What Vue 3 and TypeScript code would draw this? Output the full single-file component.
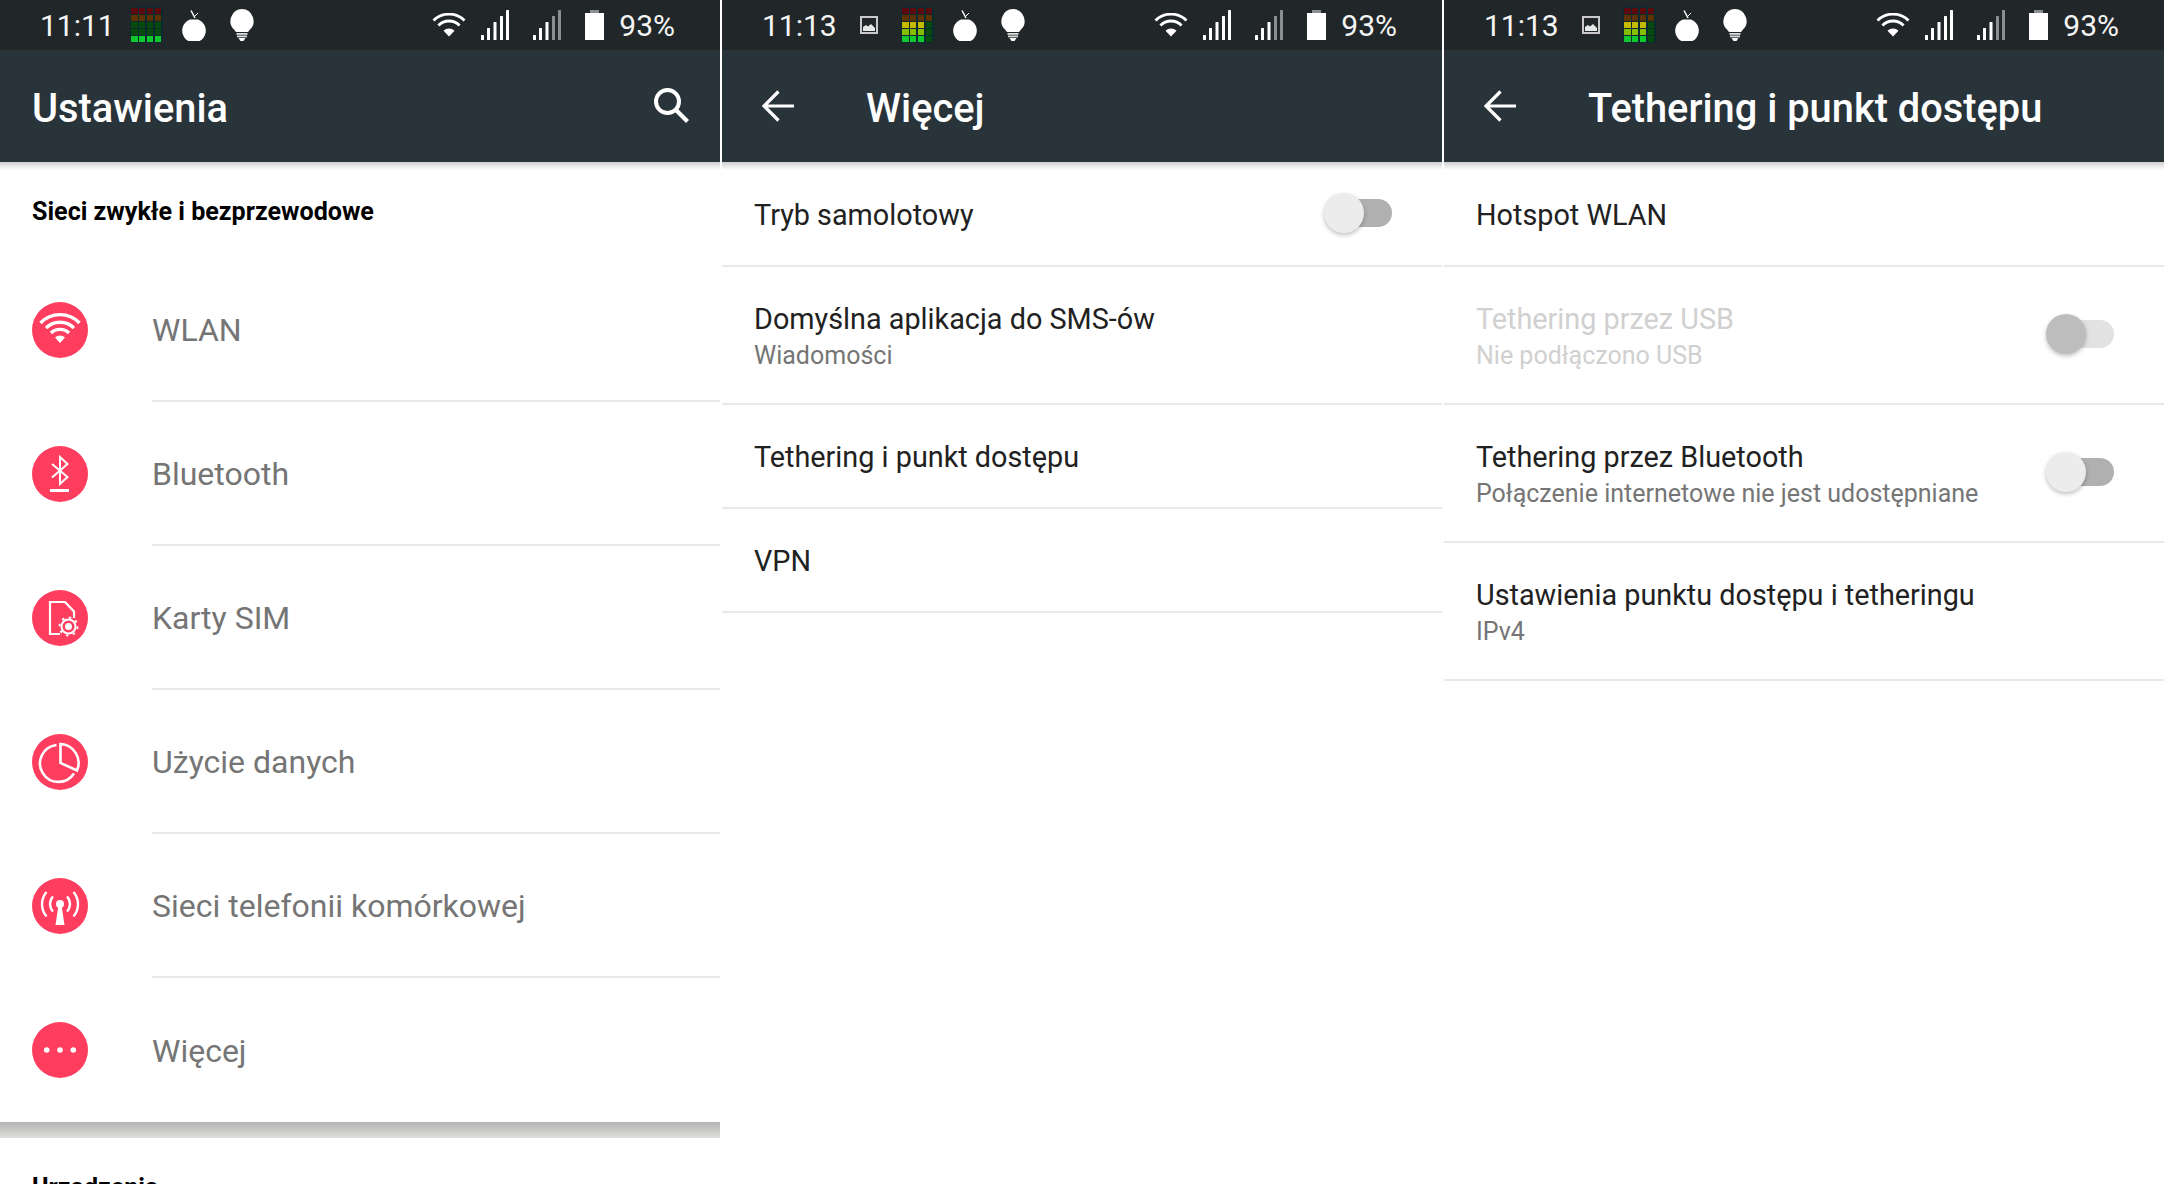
<script setup lang="ts">
interface Row { title: string; sub?: string; toggle?: 'on' | 'off'; disabled?: boolean }
interface Panel {
  key: string; title: string; back: boolean; time: string; gallery: boolean;
  meter: string[]; rows: Row[];
}
const lowMeter = ['rrrr', 'bbbb', 'gggg', 'gggg', 'llll'];
const highMeter = ['rrrr', 'bbbb', 'yyyg', 'cccg', 'lllg'];

const panels: Panel[] = [
  { key: 'settings', title: 'Ustawienia', back: false, time: '11:11', gallery: false, meter: lowMeter, rows: [] },
  {
    key: 'more', title: 'Więcej', back: true, time: '11:13', gallery: true, meter: highMeter,
    rows: [
      { title: 'Tryb samolotowy', toggle: 'on' },
      { title: 'Domyślna aplikacja do SMS-ów', sub: 'Wiadomości' },
      { title: 'Tethering i punkt dostępu' },
      { title: 'VPN' },
    ],
  },
  {
    key: 'tether', title: 'Tethering i punkt dostępu', back: true, time: '11:13', gallery: true, meter: highMeter,
    rows: [
      { title: 'Hotspot WLAN' },
      { title: 'Tethering przez USB', sub: 'Nie podłączono USB', toggle: 'off', disabled: true },
      { title: 'Tethering przez Bluetooth', sub: 'Połączenie internetowe nie jest udostępniane', toggle: 'on' },
      { title: 'Ustawienia punktu dostępu i tetheringu', sub: 'IPv4' },
    ],
  },
];

const networkItems = [
  { label: 'WLAN', icon: 'wifi' },
  { label: 'Bluetooth', icon: 'bt' },
  { label: 'Karty SIM', icon: 'sim' },
  { label: 'Użycie danych', icon: 'data' },
  { label: 'Sieci telefonii komórkowej', icon: 'cell' },
  { label: 'Więcej', icon: 'more' },
];
const barX = [1.5, 7.5, 14, 20.5, 26.5];
const barH = [5, 12, 18, 24, 30];
</script>

<template>
  <div class="page">
    <section v-for="p in panels" :key="p.key" class="panel">
      <div class="status">
        <span class="time">{{ p.time }}</span>
        <svg v-if="p.gallery" class="gallery" width="18" height="18" viewBox="0 0 18 18">
          <rect x="1" y="1" width="16" height="16" fill="none" stroke="#c9c9c9" stroke-width="2" />
          <path d="M3 15V11L6 9L8 10.500L11 8L15 12V15Z" fill="#e8e8e8" />
        </svg>
        <div class="meter">
          <div v-for="(line, li) in p.meter" :key="li" class="meter-row">
            <span v-for="(c, ci) in line.split('')" :key="ci" class="cell" :class="'c-' + c"></span>
          </div>
        </div>
        <svg class="bomb" width="24" height="32" viewBox="0 0 24 32">
          <path d="M8.500 10.500H15.500L16 10.500A11.800 11.800 0 1 1 8 10.500Z" fill="#fff" />
          <path d="M9 1.500L13 9" stroke="#fff" stroke-width="1.500" fill="none" />
          <path d="M13 7L16 4" stroke="#fff" stroke-width="1" fill="none" />
        </svg>
        <svg class="bulb" width="24" height="32" viewBox="0 0 24 32">
          <path d="M12 0A12 12 0 0 1 20 20.500L18 23H6L4 20.500A12 12 0 0 1 12 0Z" fill="#fff" />
          <rect x="6.500" y="24" width="11" height="1.800" fill="#ddd" />
          <rect x="7" y="26.500" width="10" height="1.800" fill="#ddd" />
          <path d="M8.500 29H15.500L13.500 32H10.500Z" fill="#fff" />
        </svg>
        <div class="spacer"></div>
        <svg class="wifi" width="34" height="24" viewBox="0 0 34 24">
          <path d="M1.500 7.500A22 22 0 0 1 32.500 7.500M6.400 12.400A15 15 0 0 1 27.600 12.400" fill="none" stroke="#fff" stroke-width="2.800" />
          <path d="M11.500 17.800A7.800 7.800 0 0 1 22.500 17.800L17 23.500Z" fill="#fff" />
        </svg>
        <svg class="signal" width="28" height="32" viewBox="0 0 28 32">
          <rect v-for="(x, i) in barX" :key="i" :x="x - 1.5" :y="31 - barH[i]" width="3" :height="barH[i]" rx="0.500" fill="#fff" />
        </svg>
        <svg class="signal sig2" width="28" height="32" viewBox="0 0 28 32">
          <rect v-for="(x, i) in barX" :key="i" :x="x - 1.5" :y="31 - barH[i]" width="3" :height="barH[i]" rx="0.500" :fill="i > 2 ? '#8b8f90' : '#fff'" />
        </svg>
        <svg class="battery" width="19" height="30" viewBox="0 0 19 30">
          <rect x="5" y="0" width="9" height="4" fill="#8b8f90" />
          <rect x="0" y="3" width="19" height="27" fill="#fff" />
        </svg>
        <span class="pct">93%</span>
      </div>

      <header class="appbar">
        <svg v-if="p.back" class="back" width="32" height="32" viewBox="0 0 32 32">
          <path d="M32 16H3M16.500 1.500L2 16L16.500 30.500" fill="none" stroke="#fff" stroke-width="3.200" />
        </svg>
        <h1 class="bar-title">{{ p.title }}</h1>
        <svg v-if="!p.back" class="search" width="36" height="36" viewBox="0 0 36 36">
          <circle cx="13.500" cy="13.500" r="11.500" fill="none" stroke="#fff" stroke-width="4" />
          <path d="M22 22L33.500 33.500" stroke="#fff" stroke-width="4.200" fill="none" />
        </svg>
      </header>

      <template v-if="!p.back">
        <h2 class="section-title">Sieci zwykłe i bezprzewodowe</h2>
        <div class="net-list">
          <div v-for="item in networkItems" :key="item.icon" class="net-row">
            <svg class="net-icon" width="56" height="56" viewBox="0 0 56 56">
              <circle cx="28" cy="28" r="28" fill="#ff3d5f" />
              <g v-if="item.icon === 'wifi'">
                <path d="M8.500 21A27 27 0 0 1 47.500 21M14 26A20 20 0 0 1 42 26M19 31A13 13 0 0 1 37 31" fill="none" stroke="#fff" stroke-width="3.400" />
                <path d="M23 35.500A7 7 0 0 1 33 35.500L28 41Z" fill="#fff" />
              </g>
              <g v-else-if="item.icon === 'bt'">
                <path d="M20 31.500L35.500 18L28 11V38L35.500 31L20 18" fill="none" stroke="#fff" stroke-width="2" />
                <rect x="18" y="43" width="19" height="3" fill="#fff" />
              </g>
              <g v-else-if="item.icon === 'sim'">
                <path d="M28 44H18V12H33L42 21.500V28" fill="none" stroke="#fff" stroke-width="2.200" />
                <circle cx="36.500" cy="36.500" r="7" fill="none" stroke="#fff" stroke-width="2" />
                <circle cx="36.500" cy="36.500" r="9" fill="none" stroke="#fff" stroke-width="2" stroke-dasharray="2.500 4.570" />
                <circle cx="36.500" cy="36.500" r="3.500" fill="#fff" />
              </g>
              <g v-else-if="item.icon === 'data'">
                <path d="M24.500 11A18.500 18.500 0 1 0 42 39.500" fill="none" stroke="#fff" stroke-width="2.600" />
                <path d="M28.500 10V29L45 36.500A19 19 0 0 0 28.500 10Z" fill="none" stroke="#fff" stroke-width="2.600" />
              </g>
              <g v-else-if="item.icon === 'cell'">
                <circle cx="28" cy="26" r="4" fill="#fff" />
                <path d="M26.500 27H29.500L32.500 47H23.500Z" fill="#fff" />
                <path d="M21 18.500A11 11 0 0 0 21 33.500M35 18.500A11 11 0 0 1 35 33.500M14.500 14A19 19 0 0 0 14.500 38.500M41.500 14A19 19 0 0 1 41.500 38.500" fill="none" stroke="#fff" stroke-width="2.400" />
              </g>
              <g v-else>
                <circle cx="14.700" cy="28" r="2.800" fill="#fff" />
                <circle cx="28" cy="28" r="2.800" fill="#fff" />
                <circle cx="41.300" cy="28" r="2.800" fill="#fff" />
              </g>
            </svg>
            <div class="net-label"><span>{{ item.label }}</span></div>
          </div>
        </div>
        <div class="band"></div>
        <h2 class="section-title">Urządzenia</h2>
      </template>

      <div v-else class="pref-list">
        <div v-for="r in p.rows" :key="r.title" class="pref" :class="{ disabled: r.disabled, two: !!r.sub }">
          <div class="pref-text">
            <div class="pref-title">{{ r.title }}</div>
            <div v-if="r.sub" class="pref-sub">{{ r.sub }}</div>
          </div>
          <div v-if="r.toggle" class="switch" :class="{ off: r.disabled }">
            <span class="thumb"></span>
          </div>
        </div>
      </div>
    </section>
  </div>
</template>

<style scoped>
.page {
  display: flex;
  gap: 2px;
  width: 2164px;
  height: 1184px;
  overflow: hidden;
  background: #fff;
  font-family: Roboto, "Noto Sans", sans-serif;
}
.panel {
  flex: none;
  width: 720px;
  height: 1184px;
  overflow: hidden;
  background: #fff;
}
.status {
  display: flex;
  align-items: center;
  height: 50px;
  padding: 0 45px 0 40px;
  background: #212729;
  color: #fff;
}
.time,
.pct {
  padding-top: 2px;
  font-size: 30px;
  line-height: 48px;
  color: #f5f5f5;
}
.gallery {
  margin-left: 23px;
}
.meter {
  display: flex;
  flex-direction: column;
  justify-content: center;
  gap: 1.500px;
  width: 33px;
  height: 36px;
  margin-left: 15px;
  padding: 0 1.500px;
  box-sizing: border-box;
  background: #0b2a30;
  border-radius: 4px;
}
.gallery + .meter {
  margin-left: 23px;
}
.meter-row {
  display: flex;
  gap: 1.500px;
  height: 5.500px;
}
.cell {
  flex: 1;
}
.c-r { background: #5b0a10; }
.c-b { background: #5f3300; }
.c-g { background: #064a0e; }
.c-y { background: #c6bb00; }
.c-c { background: #86bd00; }
.c-l { background: #0fc92f; }
.bomb {
  margin-left: 19px;
}
.bulb {
  margin-left: 24.500px;
}
.spacer {
  flex: 1;
}
.signal {
  margin-left: 15px;
}
.sig2 {
  margin-left: 24px;
}
.battery {
  margin-left: 24px;
}
.pct {
  margin-left: 15px;
}
.appbar {
  position: relative;
  display: flex;
  align-items: center;
  height: 112px;
  padding: 0 30px 0 32px;
  box-sizing: border-box;
  background: #29333a;
}
.appbar::after {
  content: "";
  position: absolute;
  left: 0;
  right: 0;
  top: 100%;
  height: 8px;
  background: linear-gradient(#cfcfcf, #fff);
}
.bar-title {
  flex: 1;
  margin: 0;
  padding-top: 6px;
  font-size: 39.800px;
  font-weight: 500;
  line-height: 56px;
  color: #fff;
}
.back {
  flex: none;
  margin: 0 72px 0 8px;
}
.search {
  flex: none;
}
.section-title {
  margin: 0;
  height: 96px;
  padding: 34px 32px 0;
  box-sizing: border-box;
  font-size: 25.100px;
  font-weight: 700;
  line-height: 32px;
  color: #000;
}
.net-row {
  display: flex;
  align-items: stretch;
  height: 144px;
  padding-left: 32px;
  box-sizing: border-box;
}
.net-icon {
  flex: none;
  align-self: center;
}
.net-label {
  flex: 1;
  display: flex;
  align-items: center;
  margin-left: 64px;
  padding-top: 2px;
  font-size: 32px;
  color: #757575;
  border-bottom: 2px solid #e8e8e8;
}
.net-row:last-child .net-label {
  border-bottom: 0;
}
.band {
  height: 16px;
  background: linear-gradient(#b4b4b2, #dddddb);
}
.pref {
  display: flex;
  align-items: center;
  height: 104px;
  padding: 0 32px;
  box-sizing: border-box;
  border-bottom: 2px solid #e8e8e8;
}
.pref:first-child {
  height: 105px;
}
.pref.two {
  height: 138px;
}
.pref-text {
  flex: 1;
  min-width: 0;
  padding-top: 2px;
}
.pref-title {
  font-size: 28.800px;
  line-height: 38px;
  color: #212121;
}
.pref-sub {
  margin: 1px 0 -1px;
  font-size: 25px;
  line-height: 34px;
  color: #757575;
}
.disabled .pref-title,
.disabled .pref-sub {
  color: #d0d0d0;
}
.switch {
  position: relative;
  flex: none;
  width: 55px;
  height: 28px;
  margin: -2px 18px 0 0;
  border-radius: 14px;
  background: #b0b0b0;
}
.thumb {
  position: absolute;
  left: -13px;
  top: -6px;
  width: 40px;
  height: 40px;
  border-radius: 50%;
  background: #ececec;
  box-shadow: 0 2px 4px rgba(0, 0, 0, 0.25);
}
.switch.off {
  background: #e2e2e2;
}
.switch.off .thumb {
  background: #bdbdbd;
}
</style>
